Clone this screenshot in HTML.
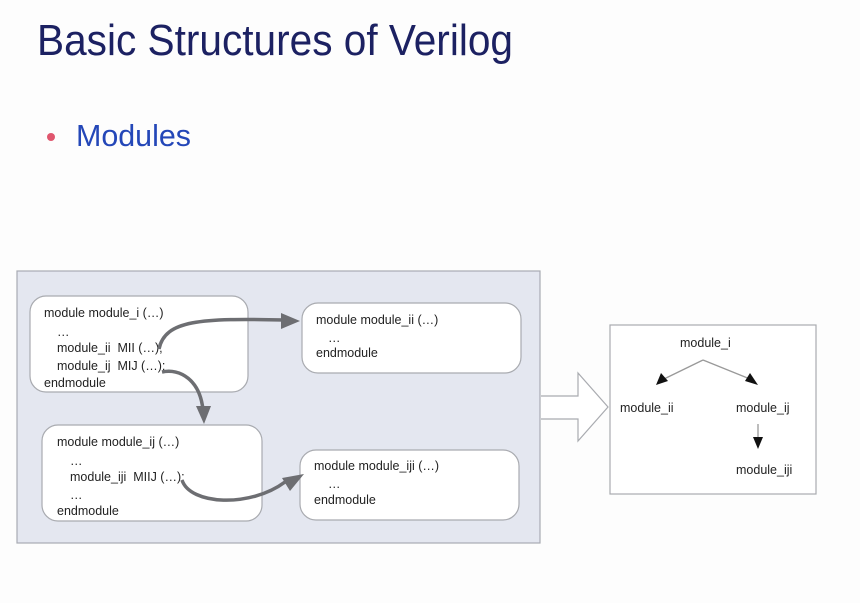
<!DOCTYPE html>
<html><head><meta charset="utf-8"><style>
html,body{margin:0;padding:0;background:#fff;width:860px;height:603px;overflow:hidden}
svg text{font-family:"Liberation Sans",Arial,sans-serif}
</style></head><body>
<svg width="860" height="603" viewBox="0 0 860 603" xmlns="http://www.w3.org/2000/svg">
<rect width="860" height="603" fill="#fdfdfd"/>
<text x="37" y="55" font-size="44" fill="#1c2162" textLength="476" lengthAdjust="spacingAndGlyphs">Basic Structures of Verilog</text>
<circle cx="51" cy="137" r="4" fill="#e0566e"/>
<text x="76" y="146" font-size="31" fill="#2447b8" textLength="115" lengthAdjust="spacingAndGlyphs">Modules</text>

<rect x="17" y="271" width="523" height="272" fill="#e4e7f0" stroke="#a8abb3" stroke-width="1.2"/>
<g fill="#fff" stroke="#a9abb0" stroke-width="1.2">
<rect x="30" y="296" width="218" height="96" rx="16"/>
<rect x="302" y="303" width="219" height="70" rx="16"/>
<rect x="42" y="425" width="220" height="96" rx="16"/>
<rect x="300" y="450" width="219" height="70" rx="16"/>
</g>
<g font-size="12.5" fill="#222">
<text x="44" y="317">module module_i (…)</text>
<text x="57" y="336">…</text>
<text x="57" y="352">module_ii&#160;&#160;MII (…);</text>
<text x="57" y="370">module_ij&#160;&#160;MIJ (…);</text>
<text x="44" y="387">endmodule</text>
<text x="316" y="324">module module_ii (…)</text>
<text x="328" y="342">…</text>
<text x="316" y="357">endmodule</text>
<text x="57" y="446">module module_ij (…)</text>
<text x="70" y="465">…</text>
<text x="70" y="481">module_iji&#160;&#160;MIIJ (…);</text>
<text x="70" y="499">…</text>
<text x="57" y="515">endmodule</text>
<text x="314" y="470">module module_iji (…)</text>
<text x="328" y="488">…</text>
<text x="314" y="504">endmodule</text>
</g>
<g fill="none" stroke="#6d6e72" stroke-width="3.5">
<path d="M159 349 C165 320 200 318 285 320"/>
<path d="M162 372 C180 368 200 380 203 410"/>
<path d="M182 480 C190 505 250 508 285 482"/>
</g>
<g fill="#6d6e72">
<path d="M300 321 L281 313 L281 329 Z"/>
<path d="M204 424 L196 406 L211 406 Z"/>
<path d="M304 474 L282 478 L290 491 Z"/>
</g>

<path d="M541 396 L578 396 L578 373 L608 407 L578 441 L578 419 L541 419" fill="#fff" stroke="#a9abb0" stroke-width="1.2"/>
<rect x="610" y="325" width="206" height="169" fill="#fff" stroke="#a9abb0" stroke-width="1.2"/>
<g font-size="12.5" fill="#222">
<text x="680" y="347">module_i</text>
<text x="620" y="412">module_ii</text>
<text x="736" y="412">module_ij</text>
<text x="736" y="474">module_iji</text>
</g>
<g stroke="#999" stroke-width="1.3" fill="none">
<path d="M703 360 L664 379"/><path d="M703 360 L750 379"/><path d="M758 424 L758 439"/>
</g>
<g fill="#111">
<path d="M656 385 L661 373 L668 381 Z"/>
<path d="M758 385 L750 373 L745 381 Z"/>
<path d="M758 449 L753 437 L763 437 Z"/>
</g>
</svg>
</body></html>
